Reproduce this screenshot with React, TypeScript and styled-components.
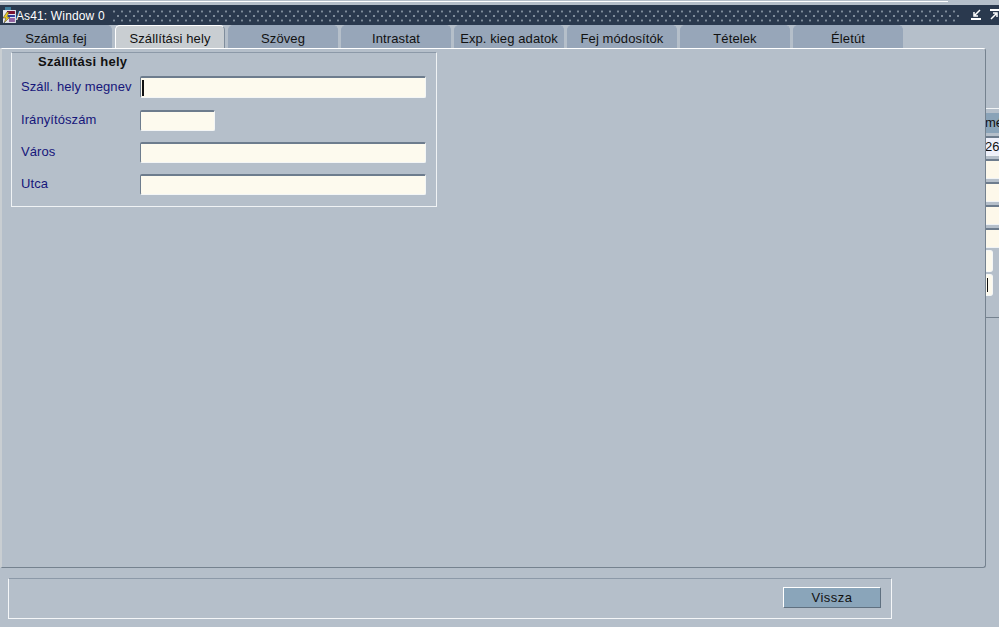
import React from "react";
import styled, { createGlobalStyle } from "styled-components";

const TABS = [
  "Számla fej",
  "Szállítási hely",
  "Szöveg",
  "Intrastat",
  "Exp. kieg adatok",
  "Fej módosítók",
  "Tételek",
  "Életút",
];

const FIELDS = [
  { label: "Száll. hely megnev", short: false, focused: true },
  { label: "Irányítószám", short: true, focused: false },
  { label: "Város", short: false, focused: false },
  { label: "Utca", short: false, focused: false },
];

function WindowIcon() {
  return (
    <svg width="14" height="17" viewBox="0 0 14 17">
      <rect x="3" y="0" width="6" height="4" fill="#3f7f9f" />
      <rect x="1" y="3" width="13" height="13" fill="#e8e8f0" />
      <rect x="5" y="4" width="8" height="3" fill="#7a1030" />
      <rect x="6" y="8" width="7" height="2" fill="#3040a0" />
      <rect x="7" y="11" width="6" height="4" fill="#9060a0" />
      <path d="M5 5 L1 11 H4 L2 16 L8 10 H5 L7 5 Z" fill="#f0d020" stroke="#303030" strokeWidth="0.5" />
    </svg>
  );
}

function MinimizeIcon() {
  return (
    <svg width="12" height="12" viewBox="0 0 12 12">
      <path d="M9 1 L4 6 M3 3 V7 H7" stroke="#fff" strokeWidth="1.5" fill="none" />
      <rect x="0" y="9" width="10" height="2" fill="#fff" />
    </svg>
  );
}

function MaximizeIcon() {
  return (
    <svg width="9" height="12" viewBox="0 0 9 12">
      <rect x="0" y="0" width="9" height="2" fill="#fff" />
      <path d="M1 10 L6 5 M3 4 H7 V8" stroke="#fff" strokeWidth="1.5" fill="none" />
    </svg>
  );
}

export default function App() {
  return (
    <>
      <GlobalStyle />
      <Screen>
        <TopStrip />
        <TitleBar>
          <WindowIcon />
          <TitleText>As41: Window 0</TitleText>
          <Dots />
          <TitleButtons>
            <MinimizeIcon />
            <MaximizeIcon />
          </TitleButtons>
        </TitleBar>
        <TabRow>
          {TABS.map((tab, i) => (
            <Tab key={tab} $active={i === 1} $first={i === 0}>
              {tab}
            </Tab>
          ))}
        </TabRow>
        <Middle>
          <MainPanel>
            <GroupBox>
              <GroupTitle>Szállítási hely</GroupTitle>
              <FieldList>
                {FIELDS.map((f) => (
                  <FieldRow key={f.label}>
                    <FieldLabel $focused={f.focused}>{f.label}</FieldLabel>
                    <Field $short={f.short} $focused={f.focused}>
                      {f.focused && <Caret />}
                    </Field>
                  </FieldRow>
                ))}
              </FieldList>
            </GroupBox>
          </MainPanel>
          <BehindWindow>
            <BehindFrame>
              <BehindHeader>mé</BehindHeader>
              <BehindCell $current>26</BehindCell>
              <BehindCell />
              <BehindCell />
              <BehindCell />
              <BehindCell />
              <BehindSmall />
              <BehindSmall>
                <SmallCaret />
              </BehindSmall>
            </BehindFrame>
          </BehindWindow>
        </Middle>
        <BottomBar>
          <BackButton>Vissza</BackButton>
        </BottomBar>
      </Screen>
    </>
  );
}

const GlobalStyle = createGlobalStyle`
  html, body {
    margin: 0;
    padding: 0;
    background: #b5bfca;
  }
  * {
    box-sizing: border-box;
  }
`;

const Screen = styled.div`
  width: 999px;
  height: 627px;
  overflow: hidden;
  background: #b5bfca;
  font-family: "Liberation Sans", Arial, sans-serif;
  font-size: 13px;
`;

const TopStrip = styled.div`
  width: 948px;
  height: 5px;
  border-top: 1px solid #b5bfca;
  box-shadow: inset 0 1px 0 #fff;
`;

const TitleBar = styled.div`
  height: 20px;
  background: #2a394e;
  display: flex;
  align-items: center;
  padding-left: 2px;
  overflow: hidden;
`;

const TitleText = styled.div`
  color: #fff;
  font-size: 12px;
  letter-spacing: 0.15px;
  white-space: nowrap;
  width: 97px;
  padding-top: 2px;
`;

const Dots = styled.div`
  width: 852px;
  height: 12px;
  margin-top: 1px;
  background-color: #2a394e;
  background-image:
    radial-gradient(circle at 2px 1.5px, #7f8c9b 1px, transparent 1.2px),
    radial-gradient(circle at 6px 6px, #7f8c9b 1px, transparent 1.2px);
  background-size: 8px 9px;
`;

const TitleButtons = styled.div`
  display: flex;
  gap: 7px;
  margin-left: 11px;
  align-items: center;
`;

const TabRow = styled.div`
  height: 23px;
  display: flex;
  gap: 3px;
  align-items: stretch;
`;

const Tab = styled.div<{ $active: boolean; $first: boolean }>`
  width: ${(p) => (p.$first ? "112px" : "110px")};
  display: flex;
  align-items: center;
  justify-content: center;
  color: #111;
  letter-spacing: 0.1px;
  white-space: nowrap;
  padding-top: 3px;
  background: ${(p) => (p.$active ? "#c9ced2" : "#97a6b9")};
  border-top: 1px solid ${(p) => (p.$active ? "#fff" : "#97a6b9")};
  border-left: 1px solid ${(p) => (p.$active ? "#fff" : "#97a6b9")};
  border-right: 1px solid ${(p) => (p.$active ? "#7f8d9c" : "#97a6b9")};
  border-top-left-radius: ${(p) => (p.$first ? "0" : "5px")};
  border-top-right-radius: 5px;
`;

const Middle = styled.div`
  height: 520px;
  display: flex;
  align-items: stretch;
`;

const MainPanel = styled.div`
  width: 986px;
  height: 520px;
  padding: 3px 0 0 9px;
  background: #b5bfca;
  border-top: 1px solid #fff;
  border-right: 1px solid #75828f;
  border-bottom: 1px solid #75828f;
  border-left: 2px solid #c9ced2;
  border-top-right-radius: 3px;
  border-bottom-right-radius: 3px;
`;

const GroupBox = styled.div`
  width: 426px;
  height: 155px;
  border: 1px solid #f0f3f5;
  border-top-color: #8c99a8;
  padding: 2px 0 0 9px;
`;

const GroupTitle = styled.div`
  font-weight: bold;
  color: #111;
  letter-spacing: 0.27px;
  margin-left: 17px;
  line-height: 14px;
`;

const FieldList = styled.div`
  display: flex;
  flex-direction: column;
  gap: 10px;
  margin-top: 7px;
`;

const FieldRow = styled.div`
  display: flex;
  align-items: flex-start;
  height: 22px;
`;

const FieldLabel = styled.div<{ $focused: boolean }>`
  width: 119px;
  color: #16167a;
  letter-spacing: 0.08px;
  white-space: nowrap;
  line-height: 22px;
  padding-top: ${(p) => (p.$focused ? "0" : "1px")};
`;

const Field = styled.div<{ $short: boolean; $focused: boolean }>`
  flex: none;
  width: ${(p) => (p.$short ? "75px" : "286px")};
  height: ${(p) => (p.$focused ? "22px" : "21px")};
  margin-top: ${(p) => (p.$focused ? "0" : "2px")};
  background: #fdfaee;
  border: 1px solid #f4f6f6;
  border-top: 2px solid #6d7c8d;
  border-left: 1px solid #6d7c8d;
  border-radius: 2px;
  display: flex;
  align-items: center;
`;

const Caret = styled.div`
  width: 2px;
  height: 16px;
  margin-left: 1px;
  background: #111;
`;

const BehindWindow = styled.div`
  width: 13px;
  height: 520px;
  overflow: hidden;
  padding-top: 60px;
`;

const BehindFrame = styled.div`
  height: 210px;
  padding-top: 4px;
  border-top: 1px solid #f0f3f5;
  border-bottom: 1px solid #75828f;
`;

const BehindHeader = styled.div`
  height: 20px;
  background: #8aa3b8;
  color: #111;
  white-space: nowrap;
  line-height: 20px;
  margin-left: -1px;
`;

const BehindCell = styled.div<{ $current?: boolean }>`
  height: 20px;
  margin-top: 3px;
  background: ${(p) => (p.$current ? "#eef0fa" : "#fdf8ea")};
  border-top: 2px solid #6d7c8d;
  border-bottom: 1px solid #f0f3f5;
  color: #111;
  line-height: 17px;
  white-space: nowrap;
  margin-left: -1px;
`;

const BehindSmall = styled.div`
  width: 7px;
  height: 22px;
  margin-top: 2px;
  background: #fdfaee;
  border: 1px solid #f4f6f6;
  border-left: 0;
  border-radius: 0 3px 3px 0;
`;

const SmallCaret = styled.div`
  width: 1px;
  height: 14px;
  margin: 3px 0 0 1px;
  background: #111;
`;

const BottomBar = styled.div`
  width: 884px;
  height: 41px;
  margin: 10px 0 0 8px;
  border: 1px solid #f4f6f8;
  border-top-color: #8c99a8;
  display: flex;
  justify-content: flex-end;
  align-items: flex-start;
  padding: 8px 10px 0 0;
`;

const BackButton = styled.div`
  width: 98px;
  height: 21px;
  background: #8aa5ba;
  border-top: 1px solid #fff;
  border-left: 1px solid #fff;
  border-right: 1px solid #5f7080;
  border-bottom: 1px solid #5f7080;
  color: #111;
  letter-spacing: 0.45px;
  display: flex;
  align-items: center;
  justify-content: center;
`;
